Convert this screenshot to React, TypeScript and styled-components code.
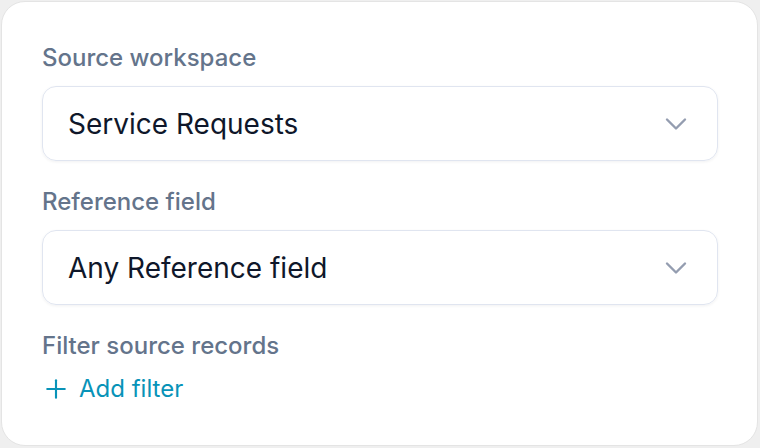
import styled, { createGlobalStyle } from "styled-components";
import { ChevronDown, Plus } from "lucide-react";

const GlobalStyle = createGlobalStyle`
  html, body {
    margin: 0;
    padding: 0;
    background: #efefef;
    font-family: "Inter", "Liberation Sans", sans-serif;
  }
`;

const Page = styled.div`
  width: 760px;
  height: 448px;
  padding: 1px 2px 2px 1px;
  box-sizing: border-box;
  display: flex;
`;

const Card = styled.div`
  flex: 1;
  background: #ffffff;
  border: 1px solid #e4e4e4;
  border-radius: 24px;
  padding: 39px 39px 0 40px;
  display: flex;
  flex-direction: column;
`;

const Field = styled.div`
  display: flex;
  flex-direction: column;
  gap: 12px;
  margin-bottom: 24px;
`;

const Label = styled.div`
  padding-top: 1px;
  font-size: 24px;
  line-height: 32px;
  color: #64748b;
  font-weight: 500;
`;

const Select = styled.div`
  height: 75px;
  box-sizing: border-box;
  border: 1.5px solid #e0e5f0;
  border-radius: 14px;
  box-shadow: 0 1px 3px rgba(15, 23, 42, 0.06);
  display: flex;
  align-items: center;
  justify-content: space-between;
  padding: 0 23px 0 25px;
  font-size: 28px;
  color: #0f172a;
`;

const AddButton = styled.button`
  display: flex;
  align-items: center;
  gap: 8px;
  background: none;
  border: none;
  padding: 0;
  margin-left: -1px;
  font-family: inherit;
  font-size: 24px;
  line-height: 28px;
  color: #0893b8;
  cursor: pointer;
`;

export default function App() {
  return (
    <>
      <GlobalStyle />
      <Page>
        <Card>
          <Field>
            <Label>Source workspace</Label>
            <Select>
              Service Requests
              <ChevronDown size={36} color="#949db0" strokeWidth={1.6} />
            </Select>
          </Field>
          <Field>
            <Label>Reference field</Label>
            <Select>
              Any Reference field
              <ChevronDown size={36} color="#949db0" strokeWidth={1.6} />
            </Select>
          </Field>
          <Field>
            <Label>Filter source records</Label>
            <AddButton>
              <Plus size={30} strokeWidth={1.7} />
              Add filter
            </AddButton>
          </Field>
        </Card>
      </Page>
    </>
  );
}
